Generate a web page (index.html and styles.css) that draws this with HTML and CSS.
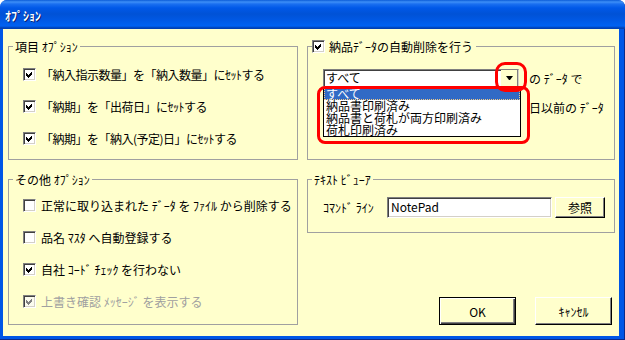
FILE: index.html
```html
<!DOCTYPE html>
<html lang="ja">
<head>
    <meta charset="UTF-8">
    <title>オプション</title>
    <link rel="stylesheet" href="styles.css">
</head>
<body>
    <div class="window">
        <div class="titlebar">
            <span class="title">ｵﾌﾟｼｮﾝ</span>
        </div>

        <div class="client">
            <div class="col">
                <fieldset class="group group-items">
                    <legend>項目 ｵﾌﾟｼｮﾝ</legend>
                    <div class="rows">
                        <label class="row"><span class="check"><svg class="tick" viewBox="0 0 7 7"><path d="M0 2l2 2 4-4v3l-4 4-2-2z"/></svg></span>「納入指示数量」を「納入数量」にｾｯﾄする</label>
                        <label class="row"><span class="check"><svg class="tick" viewBox="0 0 7 7"><path d="M0 2l2 2 4-4v3l-4 4-2-2z"/></svg></span>「納期」を「出荷日」にｾｯﾄする</label>
                        <label class="row"><span class="check"><svg class="tick" viewBox="0 0 7 7"><path d="M0 2l2 2 4-4v3l-4 4-2-2z"/></svg></span>「納期」を「納入(予定)日」にｾｯﾄする</label>
                    </div>
                </fieldset>

                <fieldset class="group group-other">
                    <legend>その他 ｵﾌﾟｼｮﾝ</legend>
                    <div class="rows">
                        <label class="row"><span class="check"></span>正常に取り込まれた ﾃﾞｰﾀ を ﾌｧｲﾙ から削除する</label>
                        <label class="row"><span class="check"></span>品名 ﾏｽﾀ へ自動登録する</label>
                        <label class="row"><span class="check"><svg class="tick" viewBox="0 0 7 7"><path d="M0 2l2 2 4-4v3l-4 4-2-2z"/></svg></span>自社 ｺｰﾄﾞ ﾁｪｯｸ を行わない</label>
                        <label class="row disabled"><span class="check"><svg class="tick" viewBox="0 0 7 7"><path d="M0 2l2 2 4-4v3l-4 4-2-2z"/></svg></span>上書き確認 ﾒｯｾｰｼﾞ を表示する</label>
                    </div>
                </fieldset>
            </div>

            <div class="col">
                <fieldset class="group group-delete">
                    <legend>
                        <span class="legend-check"><span class="check"><svg class="tick" viewBox="0 0 7 7"><path d="M0 2l2 2 4-4v3l-4 4-2-2z"/></svg></span>納品ﾃﾞｰﾀの自動削除を行う</span>
                    </legend>
                    <div class="delete-body">
                        <div class="line">
                            <div class="combo">
                                <span class="combo-text">すべて</span>
                                <span class="combo-btn"><span class="arrow"></span></span>
                                <ul class="combo-list">
                                    <li class="selected">すべて</li>
                                    <li>納品書印刷済み</li>
                                    <li>納品書と荷札が両方印刷済み</li>
                                    <li>荷札印刷済み</li>
                                </ul>
                                <span class="mark mark-btn"></span>
                                <span class="mark mark-list"></span>
                            </div>
                            <span>の ﾃﾞｰﾀ で</span>
                        </div>
                        <div class="line">
                            <span class="blank"></span>
                            <span>日以前の ﾃﾞｰﾀ</span>
                        </div>
                        <div class="line"></div>
                    </div>
                </fieldset>

                <fieldset class="group group-viewer">
                    <legend>ﾃｷｽﾄ ﾋﾞｭｰｱ</legend>
                    <div class="viewer-body">
                        <span class="viewer-label">ｺﾏﾝﾄﾞ ﾗｲﾝ</span>
                        <span class="textbox">NotePad</span>
                        <button class="btn btn-browse">参照</button>
                    </div>
                </fieldset>

                <div class="actions">
                    <button class="btn btn-lg btn-default">OK</button>
                    <button class="btn btn-lg">ｷｬﾝｾﾙ</button>
                </div>
            </div>
        </div>
    </div>
</body>
</html>
```

FILE: styles.css
```css
* {
    margin: 0;
    padding: 0;
    box-sizing: border-box;
}

body {
    background-color: #ffffff;
    font-family: "Noto Sans CJK JP", "Noto Sans", sans-serif;
    font-size: 12px;
    color: #000;
}

.window {
    width: 625px;
    height: 340px;
    display: flex;
    flex-direction: column;
    background-color: #0056e6;
    border-radius: 7px 7px 0 0;
    overflow: hidden;
    box-shadow: inset -1px -1px #0a2a8c;
}

.titlebar {
    height: 29px;
    flex: none;
    display: flex;
    align-items: center;
    padding: 3px 0 0 5px;
    background: linear-gradient(#0b5cd8 0, #3d8ff7 2px, #1a6ff0 4px, #0058e8 8px, #0052d6 14px, #0058e4 20px, #0062f2 26px, #0040b4 28px, #0040b4 29px);
}

.title {
    color: #fff;
    font-weight: bold;
    font-size: 12px;
    line-height: 14px;
    text-shadow: 1px 1px #0a2170;
}

.client {
    flex: 1;
    margin: 0 6px 4px 3px;
    background-color: #ffffcc;
    display: grid;
    grid-template-columns: 290px 308px;
    column-gap: 9px;
    padding: 11px 4px 11px 5px;
}

.col {
    display: flex;
    flex-direction: column;
    gap: 13px;
}

/* group boxes */

.group {
    border: 1px solid #a0a0a0;
    padding: 0 4px;
    min-width: 0;
}

.group legend {
    padding: 0 2px;
    height: 13px;
    line-height: 13px;
    white-space: nowrap;
}

.rows {
    display: flex;
    flex-direction: column;
    gap: 19px;
    padding-left: 10px;
}

.group-items .rows {
    padding-top: 15px;
    padding-bottom: 14px;
}

.group-items .row {
    letter-spacing: -0.5px;
}

.group-other {
    flex: 1;
}

.group-other .rows {
    padding-top: 13px;
}

.row {
    display: flex;
    align-items: center;
    gap: 5px;
    height: 13px;
    line-height: 13px;
    white-space: pre;
}

.row.disabled {
    color: #a0a0a0;
}

/* checkbox */

.check {
    width: 13px;
    height: 13px;
    flex: none;
    display: flex;
    align-items: center;
    justify-content: center;
    background-color: #fff;
    border: 1px solid;
    border-color: #808080 #fff #fff #808080;
    box-shadow: inset 1px 1px #404040, inset -1px -1px #d4d0c8;
}

.tick {
    width: 7px;
    height: 7px;
    fill: #000;
    shape-rendering: crispEdges;
}

.disabled .check {
    background-color: #fbfbee;
}

.disabled .tick {
    fill: #808080;
}

.legend-check {
    display: flex;
    align-items: center;
    gap: 4px;
}

.group-delete legend {
    padding: 0 3px 0 0;
}

/* auto delete box */

.delete-body {
    padding: 16px 0 14px 11px;
    display: flex;
    flex-direction: column;
    gap: 11px;
}

.line {
    display: flex;
    align-items: center;
    gap: 10px;
    height: 18px;
    white-space: nowrap;
}

.combo {
    position: relative;
    width: 196px;
    height: 18px;
    display: flex;
    background-color: #fff;
    border: 1px solid;
    border-color: #808080 #d4d0c8 #d4d0c8 #808080;
    box-shadow: inset 1px 1px #404040;
}

.combo-text {
    flex: 1;
    padding-left: 2px;
    line-height: 16px;
}

.combo-btn {
    width: 17px;
    display: flex;
    align-items: center;
    justify-content: center;
    background-color: #ffffcc;
    border-right: 1px solid #808080;
}

.arrow {
    width: 1px;
    height: 0;
    border-left: 3px solid transparent;
    border-right: 3px solid transparent;
    border-top: 4px solid #000;
    box-sizing: content-box;
}

.combo-list {
    position: absolute;
    top: 17px;
    left: -1px;
    width: 198px;
    list-style: none;
    background-color: #fff;
    border: 1px solid #000;
}

.combo-list li {
    height: 12px;
    line-height: 12px;
    padding-left: 2px;
    white-space: nowrap;
}

.combo-list li.selected {
    background-color: #316ac5;
    color: #fff;
    outline: 1px dotted #f3c982;
    outline-offset: -1px;
}

.mark {
    position: absolute;
    border: 3px solid #ff0000;
}

.mark-btn {
    left: 171px;
    top: -8px;
    width: 32px;
    height: 30px;
    border-radius: 10px;
}

.mark-list {
    left: -7px;
    top: 16px;
    width: 213px;
    height: 58px;
    border-radius: 8px;
}

.blank {
    width: 196px;
}

/* text viewer */

.viewer-body {
    display: flex;
    align-items: center;
    padding: 11px 0 14px 11px;
}

.viewer-label {
    width: 64px;
    white-space: nowrap;
}

.textbox {
    width: 165px;
    height: 21px;
    line-height: 17px;
    padding-left: 3px;
    background-color: #fff;
    border: 1px solid;
    border-color: #808080 #fff #fff #808080;
    box-shadow: inset 1px 1px #404040, inset -1px -1px #d4d0c8;
    margin-right: 3px;
}

/* buttons */

.btn {
    font-family: inherit;
    font-size: 12px;
    color: #000;
    background-color: #ffffcc;
    border: 1px solid;
    border-color: #fff #000 #000 #fff;
    box-shadow: inset -1px -1px #808080;
}

.btn-browse {
    width: 50px;
    height: 21px;
}

.actions {
    margin-top: auto;
    display: flex;
    justify-content: flex-end;
    gap: 19px;
    padding-right: 3px;
}

.btn-lg {
    width: 77px;
    height: 28px;
}

.btn-default {
    border-color: #000;
    box-shadow: inset 1px 1px #fff, inset -1px -1px #404040, inset -2px -2px #808080;
}
```
